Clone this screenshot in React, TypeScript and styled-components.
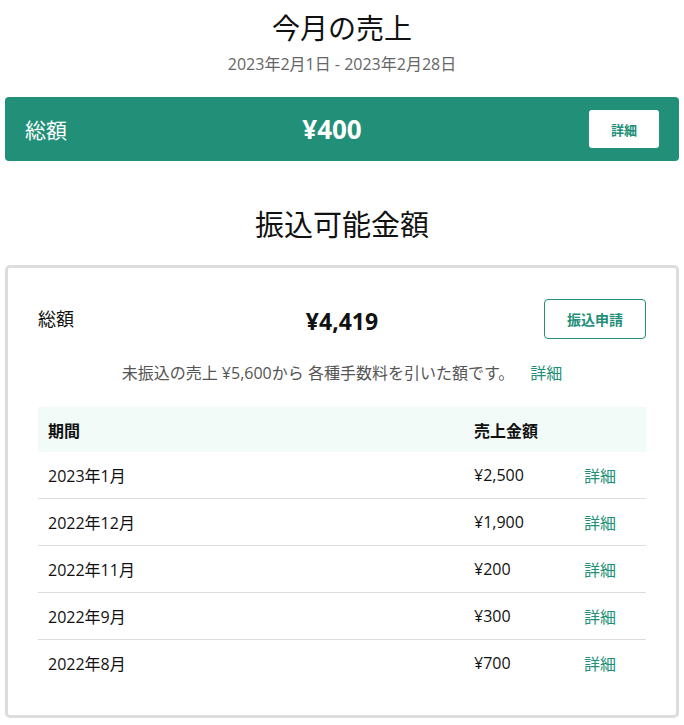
import React from "react";
import styled, { createGlobalStyle } from "styled-components";

const G = createGlobalStyle`
  body { margin: 0; font-family: "Open Sans", "Noto Sans CJK JP", sans-serif; color: #111; background: #fff; }
`;
const Page = styled.div`padding: 0 5px; display: flex; flex-direction: column;`;
const Title = styled.h1`margin: 8px 0 0; text-align: center; font-size: 28px; font-weight: 400; line-height: 40px;`;
const Sub = styled.div`text-align: center; color: #666; font-size: 16px; line-height: 24px; margin-top: 4px;`;
const Bar = styled.div`
  margin-top: 21px; height: 64px; background: #228f78; border-radius: 4px; color: #fff;
  display: grid; grid-template-columns: 1fr auto 1fr; align-items: center; padding: 0 20px 0 20px;
`;
const BarLabel = styled.div`font-size: 21px;`;
const BarValue = styled.div`font-size: 26px; font-weight: 700; margin-left: -20px;`;
const WhiteBtn = styled.button`
  justify-self: end; background: #fff; border: none; border-radius: 3px; width: 70px; height: 38px;
  color: #228f78; font-weight: 700; font-size: 13px; font-family: inherit;
`;
const H2 = styled.h2`margin: 44px 0 0; text-align: center; font-size: 29px; font-weight: 400; line-height: 40px;`;
const Box = styled.div`
  margin-top: 20px; border: 3px solid #ddd; border-radius: 5px; padding: 31px 30px 29px;
`;
const Row = styled.div`display: grid; grid-template-columns: 1fr auto 1fr; align-items: center;`;
const Label = styled.div`font-size: 18px; margin-top: -2px;`;
const Value = styled.div`font-size: 23px; font-weight: 700; margin-top: 3px;`;
const OutBtn = styled.button`
  justify-self: end; background: #fff; border: 1px solid #228f78; border-radius: 4px; width: 102px; height: 40px;
  color: #228f78; font-weight: 700; font-size: 14px; font-family: inherit;
`;
const Note = styled.div`text-align: center; color: #555; font-size: 16px; margin-top: 22px; line-height: 24px;`;
const Link = styled.span`color: #228f78; margin-left: 16px;`;
const Table = styled.div`margin-top: 22px;`;
const TRow = styled.div<{ $head?: boolean }>`
  display: grid; grid-template-columns: 426px 110px 1fr; align-items: center; padding-left: 10px;
  height: ${p => (p.$head ? "45px" : "46px")};
  background: ${p => (p.$head ? "#f3fbf9" : "transparent")};
  font-weight: ${p => (p.$head ? 700 : 400)};
  border-bottom: ${p => (p.$head ? "none" : "1px solid #ddd")};
  font-size: 16px;
  &:last-child { border-bottom: none; }
`;
const Detail = styled.span`color: #228f78;`;

const rows = [["2023年1月", "¥2,500"], ["2022年12月", "¥1,900"], ["2022年11月", "¥200"], ["2022年9月", "¥300"], ["2022年8月", "¥700"]];

export default function App() {
  return (
    <Page>
      <G />
      <Title>今月の売上</Title>
      <Sub>2023年2月1日 - 2023年2月28日</Sub>
      <Bar>
        <BarLabel>総額</BarLabel>
        <BarValue>¥400</BarValue>
        <WhiteBtn>詳細</WhiteBtn>
      </Bar>
      <H2>振込可能金額</H2>
      <Box>
        <Row>
          <Label>総額</Label>
          <Value>¥4,419</Value>
          <OutBtn>振込申請</OutBtn>
        </Row>
        <Note>未振込の売上 ¥5,600から 各種手数料を引いた額です。<Link>詳細</Link></Note>
        <Table>
          <TRow $head><span>期間</span><span>売上金額</span><span /></TRow>
          {rows.map(([a, b]) => (
            <TRow key={a}><span>{a}</span><span>{b}</span><Detail>詳細</Detail></TRow>
          ))}
        </Table>
      </Box>
    </Page>
  );
}
